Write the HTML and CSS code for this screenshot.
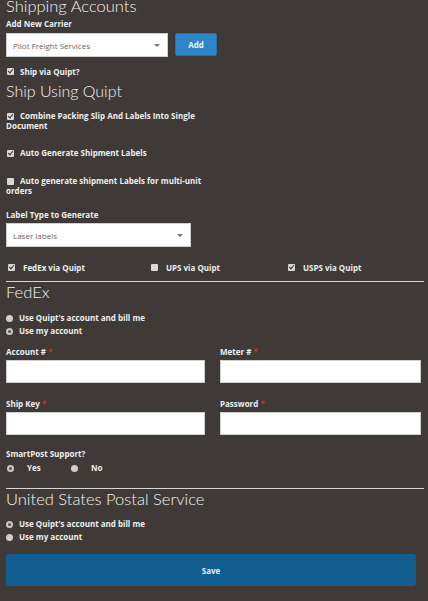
FILE: index.html
```html
<!DOCTYPE html>
<html lang="en">
<head>
<meta charset="utf-8">
<title>Shipping Accounts</title>
<link rel="stylesheet" href="styles.css">
</head>
<body>
<div class="page">
  <h1 class="title first">Shipping Accounts</h1>
  <div class="lbl add-lbl">Add New Carrier</div>
  <div class="carrier-row">
    <div class="select sel-carrier"><span>Pilot Freight Services</span><span class="caret"></span></div>
    <button class="btn-add" type="button">Add</button>
  </div>
  <div class="check ship-via"><span class="cb on"></span><span class="ct">Ship via Quipt?</span></div>
  <h2 class="title sub">Ship Using Quipt</h2>

  <div class="check wrap combine"><span class="cb on"></span><span class="ct">Combine Packing Slip And Labels Into Single Document</span></div>
  <div class="check wrap auto"><span class="cb on"></span><span class="ct">Auto Generate Shipment Labels</span></div>
  <div class="check wrap multi"><span class="cb"></span><span class="ct">Auto generate shipment Labels for multi-unit orders</span></div>

  <div class="lbl type-lbl">Label Type to Generate</div>
  <div class="select sel-type"><span>Laser labels</span><span class="caret"></span></div>

  <div class="carriers">
    <div class="check"><span class="cb on"></span><span class="ct">FedEx via Quipt</span></div>
    <div class="check"><span class="cb"></span><span class="ct">UPS via Quipt</span></div>
    <div class="check"><span class="cb on"></span><span class="ct">USPS via Quipt</span></div>
  </div>

  <hr class="divider fedex-div">
  <h2 class="title sect">FedEx</h2>
  <div class="radios fedex-radios">
    <div class="radio"><span class="rb"></span><span>Use Quipt's account and bill me</span></div>
    <div class="radio"><span class="rb on"></span><span>Use my account</span></div>
  </div>

  <div class="fields">
    <div class="field">
      <div class="lbl">Account # <span class="req">*</span></div>
      <div class="input"></div>
    </div>
    <div class="field">
      <div class="lbl">Meter # <span class="req">*</span></div>
      <div class="input"></div>
    </div>
    <div class="field">
      <div class="lbl">Ship Key <span class="req">*</span></div>
      <div class="input"></div>
    </div>
    <div class="field">
      <div class="lbl">Password <span class="req">*</span></div>
      <div class="input"></div>
    </div>
  </div>

  <div class="lbl smart-lbl">SmartPost Support?</div>
  <div class="yesno">
    <div class="radio yes"><span class="rb on"></span><span>Yes</span></div>
    <div class="radio"><span class="rb"></span><span>No</span></div>
  </div>

  <hr class="divider usps-div">
  <h2 class="title sect">United States Postal Service</h2>
  <div class="radios usps-radios">
    <div class="radio"><span class="rb on"></span><span>Use Quipt's account and bill me</span></div>
    <div class="radio"><span class="rb"></span><span>Use my account</span></div>
  </div>

  <button class="btn-save" type="button">Save</button>
</div>
</body>
</html>
```
FILE: styles.css
```css
html, body {
  margin: 0;
  padding: 0;
  background: #3f3a37;
}
body {
  font-family: "Open Sans", Lato, "Liberation Sans", sans-serif;
  color: #f2f2f2;
  overflow: hidden;
}
.page {
  padding: 0 4px 0 6px;
  height: 601px;
  box-sizing: border-box;
}
.title {
  margin: 0;
  font-family: Lato, "Open Sans", sans-serif;
  font-weight: 300;
  font-size: 16px;
  line-height: 18px;
  color: #f4f4f4;
}
.first {
  margin-top: -3px;
  font-size: 16.5px;
}
.sub {
  margin-top: 5px;
}
.sect {
  margin-top: 1px;
  font-size: 16.5px;
}
.lbl {
  font-size: 8px;
  font-weight: 700;
  line-height: 10px;
  color: #eeeeee;
}
.add-lbl {
  margin-top: 4px;
}
.carrier-row {
  display: flex;
  align-items: flex-start;
  gap: 7px;
  margin-top: 4px;
}
.select {
  display: flex;
  align-items: center;
  justify-content: space-between;
  height: 24px;
  box-sizing: border-box;
  background: #fff;
  border: 1px solid #cfcfcf;
  padding: 0 7px 0 6px;
  font-size: 8px;
  color: #666;
}
.sel-carrier {
  width: 162px;
}
.sel-type {
  width: 185px;
  margin-top: 3px;
}
.caret {
  width: 0;
  height: 0;
  border-left: 3px solid transparent;
  border-right: 3px solid transparent;
  border-top: 3px solid #777;
}
.btn-add {
  width: 42px;
  height: 23px;
  background: #2e86c9;
  border: 1px solid #2470ab;
  border-radius: 2px;
  color: #e8f2fa;
  font-family: inherit;
  font-size: 8px;
  font-weight: 700;
  padding: 0;
}
.check {
  display: flex;
  align-items: flex-start;
  font-size: 8px;
  font-weight: 700;
  line-height: 10px;
  color: #eeeeee;
}
.cb {
  flex: none;
  width: 7px;
  height: 7px;
  margin: 1px 7px 0 1px;
  background: #d8d8d8;
  border-radius: 1px;
  position: relative;
}
.cb.on::after {
  content: "";
  position: absolute;
  left: 2px;
  top: 0px;
  width: 2px;
  height: 4px;
  border: solid #333;
  border-width: 0 1px 1px 0;
  transform: rotate(40deg);
}
.ship-via {
  margin-top: 10px;
}
.ship-via .cb {
  margin-right: 6px;
}
.wrap {
  display: block;
}
.wrap .cb {
  display: inline-block;
  vertical-align: -1px;
  margin: 0 6px 0 1px;
}
.combine {
  width: 196px;
  margin-top: 11px;
}
.auto {
  margin-top: 17px;
}
.multi {
  width: 196px;
  margin-top: 18px;
}
.type-lbl {
  margin-top: 14px;
}
.carriers {
  display: grid;
  grid-template-columns: 143px 137px auto;
  margin-top: 16px;
}
.carriers .check {
  padding-left: 1px;
}
.carriers .cb {
  margin-right: 8px;
}
.divider {
  border: 0;
  height: 1px;
  background: #d6d6d6;
  margin: 8px 0 0 0;
  width: 418px;
}
.radios {
  display: flex;
  flex-direction: column;
  gap: 3px;
}
.fedex-radios {
  margin-top: 12px;
}
.radio {
  display: flex;
  align-items: center;
  font-size: 8px;
  font-weight: 700;
  line-height: 10px;
  color: #eeeeee;
}
.rb {
  flex: none;
  width: 7px;
  height: 7px;
  border-radius: 50%;
  background: #cfcfcf;
  margin-right: 6px;
  position: relative;
}
.rb.on {
  background: #c9c9c9;
}
.rb.on::after {
  content: "";
  position: absolute;
  left: 2px;
  top: 2px;
  width: 3px;
  height: 3px;
  border-radius: 50%;
  background: #555;
}
.fields {
  display: grid;
  grid-template-columns: 199px 201px;
  column-gap: 15px;
  row-gap: 16px;
  margin-top: 11px;
}
.field .lbl {
  margin-bottom: 3px;
}
.req {
  color: #d12b2b;
}
.input {
  height: 23px;
  box-sizing: border-box;
  background: #fff;
  border: 1px solid #cfcfcf;
}
.smart-lbl {
  margin-top: 14px;
}
.yesno {
  display: flex;
  margin-top: 4px;
  padding-left: 1px;
}
.yesno .rb {
  margin-right: 13px;
}
.yesno .yes {
  width: 64px;
}
.usps-div {
  margin-top: 15px;
}
.usps-radios {
  margin-top: 11px;
}
.btn-save {
  display: block;
  width: 410px;
  height: 32px;
  margin-top: 12px;
  background: #125e91;
  border: 0;
  border-radius: 3px;
  color: #e8eef3;
  font-family: inherit;
  font-size: 8px;
  font-weight: 700;
}
```
